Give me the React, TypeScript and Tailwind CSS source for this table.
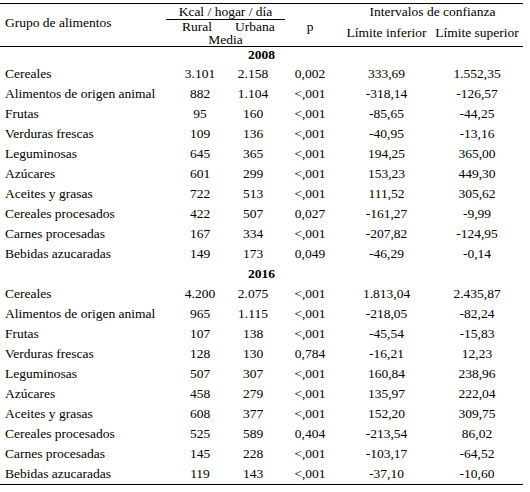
const cols = "grid grid-cols-[172px_56px_50px_64px_89px_92px]";

type Row = [string, string, string, string, string, string];

const data2008: Row[] = [
  ["Cereales", "3.101", "2.158", "0,002", "333,69", "1.552,35"],
  ["Alimentos de origen animal", "882", "1.104", "<,001", "-318,14", "-126,57"],
  ["Frutas", "95", "160", "<,001", "-85,65", "-44,25"],
  ["Verduras frescas", "109", "136", "<,001", "-40,95", "-13,16"],
  ["Leguminosas", "645", "365", "<,001", "194,25", "365,00"],
  ["Azúcares", "601", "299", "<,001", "153,23", "449,30"],
  ["Aceites y grasas", "722", "513", "<,001", "111,52", "305,62"],
  ["Cereales procesados", "422", "507", "0,027", "-161,27", "-9,99"],
  ["Carnes procesadas", "167", "334", "<,001", "-207,82", "-124,95"],
  ["Bebidas azucaradas", "149", "173", "0,049", "-46,29", "-0,14"],
];

const data2016: Row[] = [
  ["Cereales", "4.200", "2.075", "<,001", "1.813,04", "2.435,87"],
  ["Alimentos de origen animal", "965", "1.115", "<,001", "-218,05", "-82,24"],
  ["Frutas", "107", "138", "<,001", "-45,54", "-15,83"],
  ["Verduras frescas", "128", "130", "0,784", "-16,21", "12,23"],
  ["Leguminosas", "507", "307", "<,001", "160,84", "238,96"],
  ["Azúcares", "458", "279", "<,001", "135,97", "222,04"],
  ["Aceites y grasas", "608", "377", "<,001", "152,20", "309,75"],
  ["Cereales procesados", "525", "589", "0,404", "-213,54", "86,02"],
  ["Carnes procesadas", "145", "228", "<,001", "-103,17", "-64,52"],
  ["Bebidas azucaradas", "119", "143", "<,001", "-37,10", "-10,60"],
];

function DataRow({ row }: { row: Row }) {
  return (
    <div className={`${cols} h-5 items-center`}>
      <div className="pl-[5px] whitespace-nowrap">{row[0]}</div>
      {row.slice(1).map((v, i) => (
        <div key={i} className="text-center whitespace-nowrap">
          {v}
        </div>
      ))}
    </div>
  );
}

export default function App() {
  return (
    <div className="w-[530px] h-[492px] bg-white pt-[3px] text-[13.5px] text-black font-[Liberation_Serif,serif]">
      <div className="w-[523px] border-t border-b border-black">
        {/* header */}
        <div className={`${cols} h-[43px] border-b border-black`}>
          <div className="flex items-center pl-[5px] pb-[3px] whitespace-nowrap">Grupo de alimentos</div>
          <div className="col-span-2 -ml-[6px] -mr-[7px] flex flex-col">
            <div className="h-4 leading-4 text-center border-b border-black whitespace-nowrap">
              Kcal / hogar / día
            </div>
            <div className="h-[14px] leading-[14px] flex pl-[16px] whitespace-nowrap">
              <span>Rural</span>
              <span className="ml-[23px]">Urbana</span>
            </div>
            <div className="leading-[12px] text-center">Media</div>
          </div>
          <div className="flex items-center justify-center pt-[5px]">p</div>
          <div className="col-span-2 grid grid-cols-[89px_92px] grid-rows-[16px_1fr]">
            <div className="col-span-2 leading-4 text-center whitespace-nowrap">Intervalos de confianza</div>
            <div className="flex items-center justify-center whitespace-nowrap">Límite inferior</div>
            <div className="flex items-center justify-center whitespace-nowrap">Límite superior</div>
          </div>
        </div>

        <div className="h-[17px] flex items-center justify-center font-bold">2008</div>
        {data2008.map((r, i) => (
          <DataRow key={"a" + i} row={r} />
        ))}
        <div className="h-5 flex items-center justify-center font-bold">2016</div>
        {data2016.map((r, i) => (
          <DataRow key={"b" + i} row={r} />
        ))}
      </div>
    </div>
  );
}
